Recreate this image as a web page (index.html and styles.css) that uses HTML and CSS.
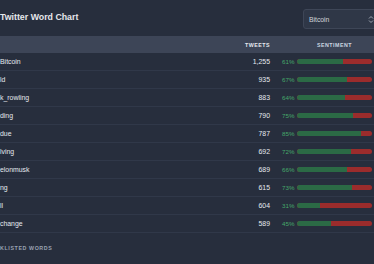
FILE: index.html
```html
<!DOCTYPE html>
<html>
<head>
<meta charset="utf-8">
<link rel="stylesheet" href="styles.css">
</head>
<body>
<div class="panel">
  <div class="topbar">
    <h1 class="title">Twitter Word Chart</h1>
    <div class="select">
      <span class="select-label">Bitcoin</span>
      <svg class="select-icon" width="6" height="9" viewBox="0 0 6 9"><path d="M1 3.5L3 1.5L5 3.5M1 5.5L3 7.5L5 5.5" fill="none" stroke="#9ca3af" stroke-width="1"/></svg>
    </div>
  </div>
  <div class="table">
    <div class="row head">
      <span class="c-name"></span>
      <span class="c-num">Tweets</span>
      <span class="c-sent">Sentiment</span>
    </div>
    <div class="row"><span class="c-name">Bitcoin</span><span class="c-num">1,255</span><span class="c-sent"><span class="pct">61%</span><span class="bar"><span class="pos" style="width:61%"></span></span></span></div>
    <div class="row"><span class="c-name">ld</span><span class="c-num">935</span><span class="c-sent"><span class="pct">67%</span><span class="bar"><span class="pos" style="width:67%"></span></span></span></div>
    <div class="row"><span class="c-name">k_rowling</span><span class="c-num">883</span><span class="c-sent"><span class="pct">64%</span><span class="bar"><span class="pos" style="width:64%"></span></span></span></div>
    <div class="row"><span class="c-name">ding</span><span class="c-num">790</span><span class="c-sent"><span class="pct">75%</span><span class="bar"><span class="pos" style="width:75%"></span></span></span></div>
    <div class="row"><span class="c-name">due</span><span class="c-num">787</span><span class="c-sent"><span class="pct">85%</span><span class="bar"><span class="pos" style="width:85%"></span></span></span></div>
    <div class="row"><span class="c-name">lving</span><span class="c-num">692</span><span class="c-sent"><span class="pct">72%</span><span class="bar"><span class="pos" style="width:72%"></span></span></span></div>
    <div class="row"><span class="c-name">elonmusk</span><span class="c-num">689</span><span class="c-sent"><span class="pct">66%</span><span class="bar"><span class="pos" style="width:66%"></span></span></span></div>
    <div class="row"><span class="c-name">ng</span><span class="c-num">615</span><span class="c-sent"><span class="pct">73%</span><span class="bar"><span class="pos" style="width:73%"></span></span></span></div>
    <div class="row"><span class="c-name">ll</span><span class="c-num">604</span><span class="c-sent"><span class="pct">31%</span><span class="bar"><span class="pos" style="width:31%"></span></span></span></div>
    <div class="row"><span class="c-name">change</span><span class="c-num">589</span><span class="c-sent"><span class="pct">45%</span><span class="bar"><span class="pos" style="width:45%"></span></span></span></div>
  </div>
  <div class="footer">Blacklisted Words</div>
</div>
</body>
</html>
```
FILE: styles.css
```css
html, body {
  margin: 0;
  padding: 0;
}
body {
  width: 374px;
  height: 264px;
  overflow: hidden;
  background: #272e3d;
  font-family: "Liberation Sans", Arial, sans-serif;
  color: #e2e8f0;
}
.panel {
  display: flex;
  flex-direction: column;
}
.topbar {
  height: 36px;
  display: flex;
  align-items: center;
  justify-content: space-between;
}
.title {
  margin: 0;
  font-size: 8.8px;
  font-weight: 700;
  color: #e5e7eb;
  margin-top: -2px;
}
.select {
  width: 80px;
  height: 20px;
  box-sizing: border-box;
  margin-right: -9px;
  margin-top: 2px;
  background: #2f3747;
  border: 1px solid #3e4657;
  border-radius: 3px;
  display: flex;
  align-items: center;
  justify-content: space-between;
  padding: 0 8px 0 5px;
}
.select-label {
  font-size: 6.8px;
  color: #d1d5db;
}
.select-icon {
  display: block;
}
.row {
  display: grid;
  grid-template-columns: 1fr 40px 90px;
  column-gap: 12px;
  padding-right: 2px;
  height: 18px;
  align-items: center;
  border-bottom: 1px solid #303849;
  box-sizing: border-box;
  font-size: 6.9px;
}
.row.head {
  height: 17px;
  background: #3d4557;
  border-bottom: none;
  font-size: 5.3px;
  font-weight: 700;
  letter-spacing: 0.5px;
  text-transform: uppercase;
  color: #cbd5e0;
}
.head .c-sent {
  display: block;
  text-align: center;
  padding-left: 15px;
}
.c-name {
  white-space: nowrap;
  color: #e6eaf0;
}
.c-num {
  text-align: right;
  color: #e6eaf0;
}
.c-sent {
  display: flex;
  align-items: center;
}
.pct {
  width: 15px;
  flex: none;
  font-size: 6.2px;
  color: #46a86a;
}
.bar {
  flex: 1;
  height: 5px;
  border-radius: 3px;
  background: #9b2c2c;
  overflow: hidden;
  display: flex;
}
.pos {
  display: block;
  height: 100%;
  background: #2b6a45;
}
.footer {
  margin-top: 12px;
  margin-left: -17px;
  font-size: 5.3px;
  font-weight: 700;
  letter-spacing: 0.6px;
  text-transform: uppercase;
  color: #9aa3b2;
}
```
